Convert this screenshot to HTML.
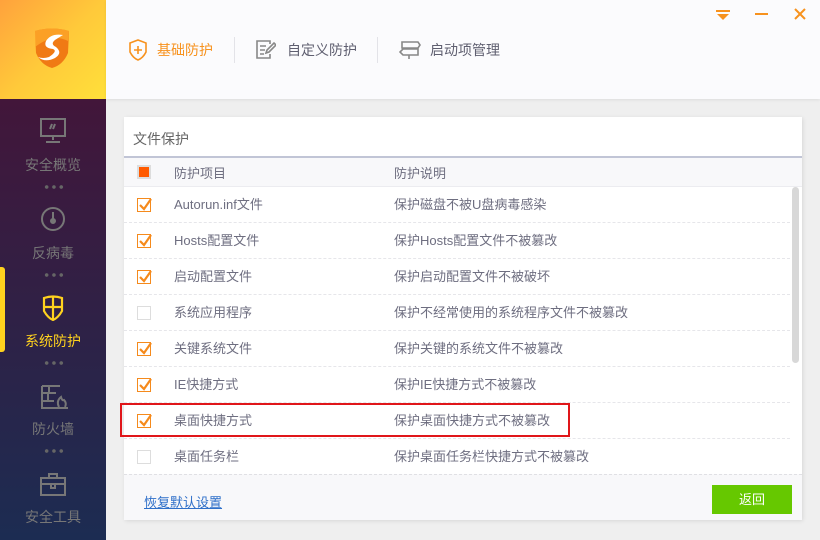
<!DOCTYPE html>
<html><head><meta charset="utf-8"><style>
*{margin:0;padding:0;box-sizing:border-box}
body{width:820px;height:540px;overflow:hidden;position:relative;background:#efefef;font-family:"Liberation Sans","Noto Sans CJK SC",sans-serif;font-size:13px;color:#6e6e80}
.abs{position:absolute}
#logo{left:0;top:0;width:106px;height:99px;background:linear-gradient(135deg,#ffa23c,#ffc93a 50%,#ffe03a)}
#side{left:0;top:99px;width:106px;height:441px;background:linear-gradient(#42163a,#1c2c52)}
.it{position:absolute;left:0;width:106px;text-align:center;color:#777;font-size:14px}
.dots{position:absolute;left:43px;width:22px;height:4px;background:radial-gradient(circle,#666 1.6px,transparent 2px) 0 0/7.3px 4px repeat-x}
#head{left:106px;top:0;width:714px;height:99px;background:#fbfbfd;box-shadow:0 1px 3px rgba(0,0,0,.08)}
.tab{position:absolute;top:40px;font-size:14px;color:#5f5f70}
.sep{position:absolute;top:37px;width:1px;height:26px;background:#e3e3e8}
#card{left:124px;top:117px;width:678px;height:403px;background:#fff;box-shadow:1px 1px 4px rgba(0,0,0,.1)}
.row{position:absolute;left:0;width:666px;height:36px;border-bottom:1px dashed #e6e6ea}
.cb{position:absolute;left:13px;top:11px;width:14px;height:14px;border:1px solid #f58a1c;background:#fff}
.cb.off{border-color:#ddd}
.cb svg{position:absolute;left:0;top:-1px}
.c1{position:absolute;left:50px;top:7px}
.c2{position:absolute;left:270px;top:7px}
</style></head><body>
<div id="logo" class="abs">
<svg class="abs" style="left:33px;top:27px" width="38" height="42" viewBox="0 0 38 42"><path d="M2 4 Q19 -1 36 4 L35 26 Q30 38 19 41 Q8 38 3 26Z" fill="#f07a14"/><path d="M2 4 Q19 -1 36 4 L35 14 Q20 6 2 20Z" fill="#ffb02e" opacity=".7"/><path d="M30 8 Q18 6 13 14 Q10 21 20 22 Q25 24 16 30 Q10 32 5 30 Q12 36 22 31 Q30 26 23 20 Q17 17 22 13 Q25 11 30 8Z" fill="#fff"/></svg>
</div>
<div id="side" class="abs">
<div class="abs" style="left:0;top:168px;width:5px;height:85px;background:#ffd21e;border-radius:0 3px 3px 0"></div>
<svg class="abs" style="left:40px;top:19px" width="26" height="26" viewBox="0 0 26 26" fill="none" stroke="#777" stroke-width="2"><rect x="1" y="1" width="24" height="17"/><path d="M13 18v4M6 24h14M12 6l-2 5M15 6l-2 5"/></svg>
<div class="it" style="top:56px">安全概览</div><div class="dots" style="top:86px"></div>
<svg class="abs" style="left:40px;top:108px" width="26" height="24" viewBox="0 0 26 24" fill="none" stroke="#777" stroke-width="2"><circle cx="13" cy="12" r="11"/><path d="M13 12V5" /><circle cx="13" cy="14" r="2" fill="#777"/></svg>
<div class="it" style="top:144px">反病毒</div><div class="dots" style="top:174px"></div>
<svg class="abs" style="left:42px;top:196px" width="22" height="26" viewBox="0 0 22 26" fill="none" stroke="#ffd21e" stroke-width="2.2"><path d="M2 3 Q11 0 20 3 V16 Q16 23 11 25 Q6 23 2 16Z M11 1V25 M2 12H20"/></svg>
<div class="it" style="top:232px;color:#ffd21e">系统防护</div><div class="dots" style="top:262px"></div>
<svg class="abs" style="left:41px;top:286px" width="28" height="24" viewBox="0 0 28 24" fill="none" stroke="#777" stroke-width="2"><path d="M1 1h18M1 1v22h26M1 8h14M1 16h12M7 8v8M8 1v7"/><path d="M18 22 Q15 16 20 12 Q21 16 23 15 Q26 18 24 22"/></svg>
<div class="it" style="top:320px">防火墙</div><div class="dots" style="top:350px"></div>
<svg class="abs" style="left:40px;top:373px" width="26" height="24" viewBox="0 0 26 24" fill="none" stroke="#777" stroke-width="2"><rect x="1" y="6" width="24" height="17"/><path d="M9 6V2h8v4M1 12h24M11 12v4h4v-4"/></svg>
<div class="it" style="top:408px">安全工具</div>
</div>
<div id="head" class="abs">
<svg class="abs" style="left:22px;top:39px" width="20" height="22" viewBox="0 0 20 22" fill="none" stroke="#f7921e" stroke-width="1.6"><path d="M2 4 L10 1 L18 4 V13 Q15 19 10 21 Q5 19 2 13Z M10 7v8M6 11h8"/></svg>
<div class="tab" style="left:51px;color:#f7921e">基础防护</div>
<div class="sep" style="left:128px"></div>
<svg class="abs" style="left:150px;top:40px" width="20" height="19" viewBox="0 0 20 19" fill="none" stroke="#888" stroke-width="1.6"><path d="M14 4V1H1v17h13v-4M4 6h6M4 10h5M4 14h4M10 13l1-3 7-7 2 2-7 7z"/></svg>
<div class="tab" style="left:181px">自定义防护</div>
<div class="sep" style="left:271px"></div>
<svg class="abs" style="left:293px;top:41px" width="22" height="18" viewBox="0 0 22 18" fill="none" stroke="#888" stroke-width="1.6"><path d="M3 1h16l2 3-2 3H3zM19 8H4L1 11l3 3h15zM10 14v4"/></svg>
<div class="tab" style="left:324px">启动项管理</div>
<svg class="abs" style="left:610px;top:10px" width="14" height="10" viewBox="0 0 14 10" fill="#f7921e"><rect width="14" height="2"/><path d="M1 4h12L7 10z"/></svg>
<div class="abs" style="left:649px;top:13px;width:13px;height:2px;background:#f7921e"></div>
<svg class="abs" style="left:688px;top:8px" width="12" height="12" viewBox="0 0 12 12" stroke="#f7921e" stroke-width="2"><path d="M1 1l10 10M11 1L1 11"/></svg>
</div>
<div id="card" class="abs">
<div class="abs" style="left:9px;top:12px;font-size:14px;color:#666">文件保护</div>
<div class="abs" style="left:0;top:39px;width:678px;height:2px;background:#c1c5d6"></div>
<div class="abs" style="left:0;top:41px;width:678px;height:29px;background:#f8f8fa;border-bottom:1px solid #ececf0">
<div class="abs" style="left:13px;top:7px;width:14px;height:14px;background:#ddd"><div style="margin:2px;width:10px;height:10px;background:#ff5a00"></div></div>
<div class="c1" style="top:5px">防护项目</div><div class="c2" style="top:5px">防护说明</div></div>
<div class="abs" style="left:0;top:70px;width:678px;height:288px;overflow:hidden">
<div class="row" style="top:0"><div class="cb"><svg width="14" height="14"><path d="M2 7l4 4 7-10" stroke="#f58a1c" stroke-width="2.2" fill="none"/></svg></div><div class="c1">Autorun.inf文件</div><div class="c2">保护磁盘不被U盘病毒感染</div></div>
<div class="row" style="top:36px"><div class="cb"><svg width="14" height="14"><path d="M2 7l4 4 7-10" stroke="#f58a1c" stroke-width="2.2" fill="none"/></svg></div><div class="c1">Hosts配置文件</div><div class="c2">保护Hosts配置文件不被篡改</div></div>
<div class="row" style="top:72px"><div class="cb"><svg width="14" height="14"><path d="M2 7l4 4 7-10" stroke="#f58a1c" stroke-width="2.2" fill="none"/></svg></div><div class="c1">启动配置文件</div><div class="c2">保护启动配置文件不被破坏</div></div>
<div class="row" style="top:108px"><div class="cb off"></div><div class="c1">系统应用程序</div><div class="c2">保护不经常使用的系统程序文件不被篡改</div></div>
<div class="row" style="top:144px"><div class="cb"><svg width="14" height="14"><path d="M2 7l4 4 7-10" stroke="#f58a1c" stroke-width="2.2" fill="none"/></svg></div><div class="c1">关键系统文件</div><div class="c2">保护关键的系统文件不被篡改</div></div>
<div class="row" style="top:180px"><div class="cb"><svg width="14" height="14"><path d="M2 7l4 4 7-10" stroke="#f58a1c" stroke-width="2.2" fill="none"/></svg></div><div class="c1">IE快捷方式</div><div class="c2">保护IE快捷方式不被篡改</div></div>
<div class="row" style="top:216px"><div class="cb"><svg width="14" height="14"><path d="M2 7l4 4 7-10" stroke="#f58a1c" stroke-width="2.2" fill="none"/></svg></div><div class="c1">桌面快捷方式</div><div class="c2">保护桌面快捷方式不被篡改</div></div>
<div class="row" style="top:252px"><div class="cb off"></div><div class="c1">桌面任务栏</div><div class="c2">保护桌面任务栏快捷方式不被篡改</div></div>
</div>
<div class="abs" style="left:668px;top:70px;width:7px;height:176px;background:#d8d8d8;border-radius:4px"></div>
<div class="abs" style="left:0;top:357px;width:678px;height:46px;background:#f8f8fa;border-top:1px dashed #e0e0e4">
<div class="abs" style="left:20px;top:17px;color:#2e6fc9;text-decoration:underline">恢复默认设置</div>
<div class="abs" style="left:588px;top:10px;width:80px;height:29px;background:#66c800;color:#fff;text-align:center;line-height:29px">返回</div>
</div>
</div>
<div class="abs" style="left:120px;top:403px;width:450px;height:34px;border:2px solid #e0161a"></div>
</body></html>
